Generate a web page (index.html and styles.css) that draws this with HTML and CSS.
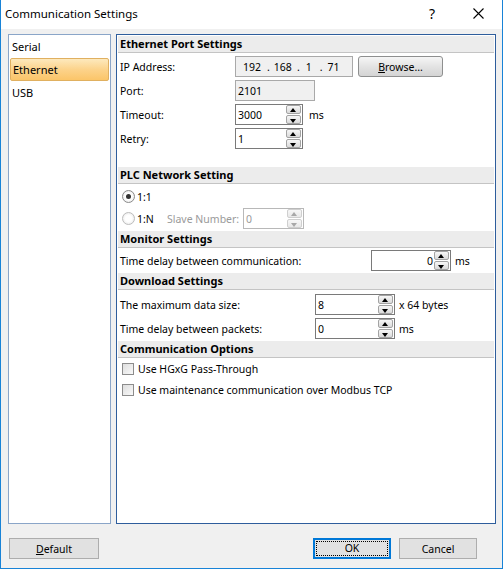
FILE: index.html
```html
<!DOCTYPE html>
<html lang="en">

<head>
    <meta charset="UTF-8">
    <title>Communication Settings</title>
    <link rel="stylesheet" href="styles.css">
</head>

<body>

    <div class="window">

        <!-- TITLE -->
        <div class="window__title">
            <span class="window__title-text">Communication Settings</span>
            <span class="window__help">?</span>
            <span class="window__close">
                <svg width="11" height="11" viewBox="0 0 11 11">
                    <path d="M0.5 0.5 L10.5 10.5 M10.5 0.5 L0.5 10.5" stroke="#000" stroke-width="1.1" fill="none" />
                </svg>
            </span>
        </div>

        <div class="window__body">
            <div class="window__main">

                <!-- LEFT LIST -->
                <ul class="side__list">
                    <li class="side__item">Serial</li>
                    <li class="side__item side__item--active">Ethernet</li>
                    <li class="side__item">USB</li>
                </ul>

                <!-- SETTINGS -->
                <div class="panel">

                    <div class="panel__header">Ethernet Port Settings</div>
                    <div class="section section--eth">
                        <div class="row">
                            <span class="row__label">IP Address:</span>
                            <div class="ip-box">
                                <span class="ip-box__part ip-box__part--1">192</span>
                                <span class="ip-box__part ip-box__part--2">.</span>
                                <span class="ip-box__part ip-box__part--3">168</span>
                                <span class="ip-box__part ip-box__part--4">.</span>
                                <span class="ip-box__part ip-box__part--5">1</span>
                                <span class="ip-box__part ip-box__part--6">.</span>
                                <span class="ip-box__part ip-box__part--7">71</span>
                            </div>
                            <button class="btn-browse"><u>B</u>rowse...</button>
                        </div>
                        <div class="row">
                            <span class="row__label">Port:</span>
                            <div class="field field--readonly field--port">2101</div>
                        </div>
                        <div class="row">
                            <span class="row__label">Timeout:</span>
                            <div class="field field--spin field--short">
                                <span class="field__value">3000</span>
                                <span class="spin"><span class="spin__up"></span><span class="spin__down"></span></span>
                            </div>
                            <span class="row__unit">ms</span>
                        </div>
                        <div class="row">
                            <span class="row__label">Retry:</span>
                            <div class="field field--spin field--short">
                                <span class="field__value">1</span>
                                <span class="spin"><span class="spin__up"></span><span class="spin__down"></span></span>
                            </div>
                        </div>
                    </div>

                    <div class="panel__header panel__header--plc">PLC Network Setting</div>
                    <div class="section section--plc">
                        <div class="row row--radio">
                            <span class="radio radio--checked"></span>
                            <span class="radio__text">1:1</span>
                        </div>
                        <div class="row row--radio">
                            <span class="radio radio--disabled"></span>
                            <span class="radio__text">1:N</span>
                            <span class="row__disabled-label">Slave Number:</span>
                            <div class="field field--spin field--disabled">
                                <span class="field__value">0</span>
                                <span class="spin spin--disabled"><span class="spin__up"></span><span class="spin__down"></span></span>
                            </div>
                        </div>
                    </div>

                    <div class="panel__header panel__header--tight">Monitor Settings</div>
                    <div class="section section--monitor">
                        <div class="row">
                            <span class="row__label">Time delay between communication:</span>
                            <div class="field field--spin field--wide">
                                <span class="field__value field__value--right">0</span>
                                <span class="spin"><span class="spin__up"></span><span class="spin__down"></span></span>
                            </div>
                            <span class="row__unit row__unit--near">ms</span>
                        </div>
                    </div>

                    <div class="panel__header panel__header--tight">Download Settings</div>
                    <div class="section section--download">
                        <div class="row">
                            <span class="row__label">The maximum data size:</span>
                            <div class="field field--spin field--wide">
                                <span class="field__value">8</span>
                                <span class="spin"><span class="spin__up"></span><span class="spin__down"></span></span>
                            </div>
                            <span class="row__unit row__unit--near">x 64 bytes</span>
                        </div>
                        <div class="row">
                            <span class="row__label">Time delay between packets:</span>
                            <div class="field field--spin field--wide">
                                <span class="field__value">0</span>
                                <span class="spin"><span class="spin__up"></span><span class="spin__down"></span></span>
                            </div>
                            <span class="row__unit row__unit--near">ms</span>
                        </div>
                    </div>

                    <div class="panel__header panel__header--tight">Communication Options</div>
                    <div class="section section--options">
                        <label class="check">
                            <span class="check__box"></span>
                            <span>Use HGxG Pass-Through</span>
                        </label>
                        <label class="check">
                            <span class="check__box"></span>
                            <span>Use maintenance communication over Modbus TCP</span>
                        </label>
                    </div>

                </div>
            </div>

            <!-- FOOTER -->
            <div class="window__footer">
                <button class="btn btn--default"><u>D</u>efault</button>
                <button class="btn btn--ok"><span class="btn__focus">OK</span></button>
                <button class="btn btn--cancel">Cancel</button>
            </div>
        </div>
    </div>

</body>

</html>
```

FILE: styles.css
```css
* {
    box-sizing: border-box;
}

body {
    margin: 0;
    font-family: "Noto Sans", "Open Sans", sans-serif;
    font-size: 10.5px;
    color: #000;
    background: #fff;
}

ul {
    margin: 0;
    padding: 0;
    list-style: none;
}

button {
    font-family: inherit;
    font-size: 10.5px;
    color: #000;
    padding: 0;
}

/* Window */

.window {
    width: 503px;
    height: 569px;
    border: 1px solid #1883d7;
    border-top: none;
    background: #f0f0f0;
    display: flex;
    flex-direction: column;
}

.window__title {
    height: 29px;
    background: #fff;
    display: flex;
    align-items: center;
    padding-left: 4px;
}

.window__title-text {
    flex: 1;
    font-size: 11.5px;
    margin-top: -2px;
}

.window__help {
    font-size: 14px;
    margin-right: 38px;
    margin-top: -2px;
}

.window__close {
    display: flex;
    margin-right: 18px;
    margin-top: -2px;
}

.window__body {
    flex: 1;
    padding: 5px 6px 0 7px;
    display: flex;
    flex-direction: column;
}

.window__main {
    display: flex;
    gap: 5px;
    height: 490px;
}

/* Left list */

.side__list {
    width: 103px;
    background: #fff;
    border: 1px solid #8aa5c8;
    padding: 0 1px;
    font-size: 11px;
}

.side__item {
    height: 23px;
    line-height: 23px;
    padding-left: 2px;
}

.side__item--active {
    background: linear-gradient(#fde9bd, #fcd38b 50%, #fbc569);
    border: 1px solid #e0b060;
    border-radius: 2px;
    line-height: 21px;
}

/* Panel */

.panel {
    flex: 1;
    background: #fff;
    border: 1px solid #2e5d9c;
    padding: 1px;
}

.panel__header {
    height: 17px;
    line-height: 16px;
    background: #ececec;
    border-bottom: 1px solid #c4c4c4;
    font-weight: bold;
    font-size: 11px;
    padding-left: 2px;
}

.panel__header--plc {
    margin-top: 18px;
}

.panel__header--tight {
    margin-top: 2px;
}

.section {
    display: flex;
    flex-direction: column;
    gap: 3px;
    padding-left: 2px;
}

.section--eth {
    padding-top: 3px;
}

.section--plc {
    padding-top: 2px;
    gap: 1px;
}

.section--monitor {
    padding-top: 2px;
}

.section--download {
    padding-top: 4px;
}

.section--options {
    gap: 0;
}

.row {
    display: flex;
    align-items: center;
    height: 21px;
    white-space: nowrap;
}

.row__label {
    width: 115px;
}

.section--monitor .row__label {
    width: 251px;
}

.section--download .row__label {
    width: 195px;
}

.row__unit {
    margin-left: 6px;
}

.row__unit--near {
    margin-left: 4px;
}

/* Fields */

.ip-box {
    width: 118px;
    height: 21px;
    background: #f0f0f0;
    border: 1px solid #a9a9a9;
    display: flex;
    align-items: center;
}

.ip-box__part--1 { margin-left: 7px; }
.ip-box__part--2 { margin-left: 6px; }
.ip-box__part--3 { margin-left: 4px; }
.ip-box__part--4 { margin-left: 5px; }
.ip-box__part--5 { margin-left: 6px; }
.ip-box__part--6 { margin-left: 8px; }
.ip-box__part--7 { margin-left: 5px; }

.btn-browse {
    margin-left: 5px;
    width: 85px;
    height: 21px;
    background: linear-gradient(#f6f6f6, #e3e3e3 50%, #d4d4d4);
    border: 1px solid #8e8f8f;
    border-radius: 3px;
}

.field {
    height: 21px;
    border: 1px solid #7a7a7a;
    background: #fff;
    display: flex;
    align-items: center;
    padding-left: 2px;
}

.field--readonly {
    background: #f0f0f0;
    border-color: #a9a9a9;
}

.field--port {
    width: 80px;
}

.field--short {
    width: 68px;
}

.field--wide {
    width: 80px;
}

.field--disabled {
    width: 61px;
    border-color: #b8b8b8;
    color: #9a9a9a;
}

.field__value {
    flex: 1;
}

.field__value--right {
    text-align: right;
    padding-right: 1px;
}

/* Spin buttons */

.spin {
    width: 15px;
    height: 19px;
    margin-right: 1px;
    display: flex;
    flex-direction: column;
    gap: 1px;
}

.spin__up,
.spin__down {
    flex: 1;
    position: relative;
    background: linear-gradient(#f7f7f7, #dadada);
    border: 1px solid #a3a3a3;
    border-radius: 2px;
}

.spin__up::after,
.spin__down::after {
    content: "";
    position: absolute;
    left: 3px;
    width: 0;
    height: 0;
    border-left: 3.5px solid transparent;
    border-right: 3.5px solid transparent;
}

.spin__up::after {
    top: 2px;
    border-bottom: 4px solid #000;
}

.spin__down::after {
    top: 3px;
    border-top: 4px solid #000;
}

.spin--disabled .spin__up,
.spin--disabled .spin__down {
    border-color: #cfcfcf;
    background: linear-gradient(#f7f7f7, #e8e8e8);
}

.spin--disabled .spin__up::after {
    border-bottom-color: #a8a8a8;
}

.spin--disabled .spin__down::after {
    border-top-color: #a8a8a8;
}

/* Radio */

.row--radio {
    padding-left: 2px;
}

.radio {
    width: 13px;
    height: 13px;
    border-radius: 50%;
    border: 1px solid #8a8a8a;
    background: radial-gradient(circle, #fff 40%, #e2e2e2);
    position: relative;
}

.radio--checked::after {
    content: "";
    position: absolute;
    top: 3px;
    left: 3px;
    width: 5px;
    height: 5px;
    border-radius: 50%;
    background: #333;
}

.radio--disabled {
    border-color: #bcbcbc;
}

.radio__text {
    margin-left: 2px;
    width: 30px;
}

.row__disabled-label {
    color: #9a9a9a;
    width: 76px;
}

/* Checkboxes */

.check {
    display: flex;
    align-items: center;
    height: 21px;
    padding-left: 2px;
}

.check__box {
    width: 12px;
    height: 12px;
    border: 1px solid #8c8c8c;
    background: linear-gradient(135deg, #dedede, #f9f9f9);
    margin-right: 4px;
}

/* Footer */

.window__footer {
    display: flex;
    align-items: center;
    margin-top: 14px;
    padding-left: 1px;
}

.btn {
    height: 21px;
    background: #e1e1e1;
    border: 1px solid #adadad;
}

.btn--default {
    width: 90px;
    margin-right: auto;
}

.btn--ok {
    width: 78px;
    border: 2px solid #0078d7;
    padding: 1px;
    margin-right: 8px;
}

.btn__focus {
    display: block;
    height: 100%;
    border: 1px dotted #000;
    line-height: 13px;
}

.btn--cancel {
    width: 78px;
    margin-right: 19px;
}
```
